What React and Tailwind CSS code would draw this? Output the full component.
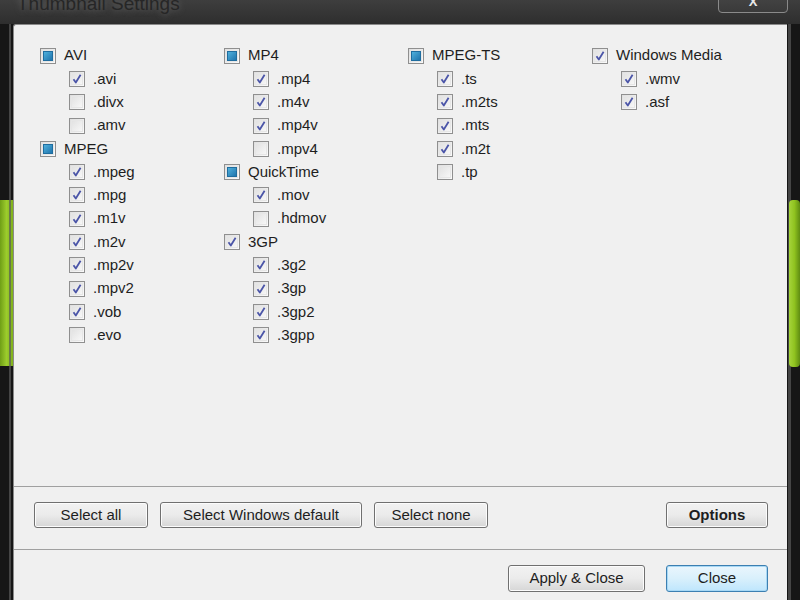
import React from 'react'

const font = { fontFamily: '"Liberation Sans", Arial, sans-serif' }

const columns = [
  [
    { label: 'AVI', state: 'mixed', items: [['.avi', true], ['.divx', false], ['.amv', false]] },
    {
      label: 'MPEG',
      state: 'mixed',
      items: [
        ['.mpeg', true],
        ['.mpg', true],
        ['.m1v', true],
        ['.m2v', true],
        ['.mp2v', true],
        ['.mpv2', true],
        ['.vob', true],
        ['.evo', false],
      ],
    },
  ],
  [
    { label: 'MP4', state: 'mixed', items: [['.mp4', true], ['.m4v', true], ['.mp4v', true], ['.mpv4', false]] },
    { label: 'QuickTime', state: 'mixed', items: [['.mov', true], ['.hdmov', false]] },
    { label: '3GP', state: 'checked', items: [['.3g2', true], ['.3gp', true], ['.3gp2', true], ['.3gpp', true]] },
  ],
  [
    {
      label: 'MPEG-TS',
      state: 'mixed',
      items: [['.ts', true], ['.m2ts', true], ['.mts', true], ['.m2t', true], ['.tp', false]],
    },
  ],
  [{ label: 'Windows Media', state: 'checked', items: [['.wmv', true], ['.asf', true]] }],
]

function Box({ state }) {
  return (
    <span className="relative flex h-[16px] w-[16px] shrink-0 items-center justify-center border border-[#8f8f8f] bg-gradient-to-br from-[#dedede] to-[#fbfbfb]">
      <span className="absolute inset-[1px] border border-[#e6e6e6]" />
      {state === 'mixed' && (
        <span className="relative h-[10px] w-[10px] border border-[#1f6d9f] bg-gradient-to-br from-[#4fb0dc] to-[#1f75ad]" />
      )}
      {state === 'checked' && (
        <svg className="relative h-[12px] w-[12px]" viewBox="0 0 12 12">
          <path d="M2.5 6.3 L4.8 9.5 L9.6 1.8" fill="none" stroke="#4b55a8" strokeWidth="1.8" strokeLinejoin="round" />
        </svg>
      )}
    </span>
  )
}

function Row({ label, state, child }) {
  return (
    <div className={`flex h-[23.3px] items-center gap-[8px] ${child ? 'pl-[29px]' : ''}`}>
      <Box state={state} />
      <span className="text-[15px] text-[#1e1e1e]">{label}</span>
    </div>
  )
}

function Button({ children, className = '', primary, bold }) {
  return (
    <button
      className={`flex items-center justify-center rounded-[3px] border text-[15px] text-[#1e1e1e] ${
        primary
          ? 'border-[#3c7fb1] bg-gradient-to-b from-[#eaf6fd] via-[#d9f0fc] to-[#bee6fd] shadow-[inset_0_0_0_1px_#a7d8f5]'
          : 'border-[#707070] bg-gradient-to-b from-[#f2f2f2] via-[#ebebeb] to-[#d6d6d6] shadow-[inset_0_0_0_1px_#fcfcfc]'
      } ${bold ? 'font-bold' : ''} ${className}`}
    >
      {children}
    </button>
  )
}

export default function App() {
  return (
    <div className="relative h-[600px] w-[800px] overflow-hidden bg-[#1b1b1b]" style={font}>
      {/* Title bar */}
      <div className="relative h-[24px] bg-gradient-to-b from-[#3e3e3e] to-[#2e2e2e]">
        <div className="absolute left-[17px] top-[-10px] text-[19px] text-[#262626] [text-shadow:0_0_6px_#6a6a6a]">
          Thumbnail Settings
        </div>
        <div className="absolute right-[12px] top-[-4px] flex h-[17px] w-[70px] items-center justify-center rounded-b-[4px] border border-[#8a8a8a] bg-gradient-to-b from-[#444] to-[#3a3a3a]">
          <span className="mt-[-6px] text-[13px] font-bold text-[#e8e8e8]">X</span>
        </div>
      </div>

      <div className="flex h-[576px]">
        {/* Left frame */}
        <div className="relative w-[13px] shrink-0 bg-[#161616]">
          <div className="absolute left-[0px] top-[176px] h-[166px] w-[13px] bg-gradient-to-r from-[#6f9e16] via-[#9ccc2c] to-[#7fb01c]" />
          <div className="absolute right-[2px] top-0 h-full w-[2px] bg-[#5a5a5a] opacity-70" />
        </div>

        {/* Content */}
        <div className="flex flex-1 flex-col rounded-tl-[3px] border-l border-t border-[#8a8a8a] bg-[#f0f0f0]">
          <div className="flex flex-1 pl-[26px] pt-[19px]">
            {columns.map((col, i) => (
              <div key={i} className="w-[184px]">
                {col.map((g) => (
                  <div key={g.label}>
                    <Row label={g.label} state={g.state} />
                    {g.items.map(([l, c]) => (
                      <Row key={l} label={l} state={c ? 'checked' : 'none'} child />
                    ))}
                  </div>
                ))}
              </div>
            ))}
          </div>

          <div className="flex h-[64px] items-start border-t border-b border-[#a0a0a0] pl-[20px] pt-[15px]">
            <Button className="h-[26px] w-[114px]">Select all</Button>
            <Button className="ml-[12px] h-[26px] w-[202px]">Select Windows default</Button>
            <Button className="ml-[12px] h-[26px] w-[114px]">Select none</Button>
            <Button bold className="ml-auto mr-[19px] h-[26px] w-[102px]">
              Options
            </Button>
          </div>

          <div className="flex h-[50px] items-start justify-end gap-[21px] pr-[19px] pt-[15px]">
            <Button className="h-[27px] w-[137px]">Apply &amp; Close</Button>
            <Button primary className="h-[27px] w-[102px]">
              Close
            </Button>
          </div>
        </div>

        {/* Right frame */}
        <div className="relative w-[13px] shrink-0 bg-[#161616]">
          <div className="absolute left-[1px] top-0 h-full w-[3px] bg-[#5a5a5a] opacity-70" />
          <div className="absolute left-[2px] top-[176px] h-[167px] w-[11px] rounded-[4px] bg-gradient-to-r from-[#a6d43a] via-[#8fc21f] to-[#5f8c12]" />
        </div>
      </div>
    </div>
  )
}
